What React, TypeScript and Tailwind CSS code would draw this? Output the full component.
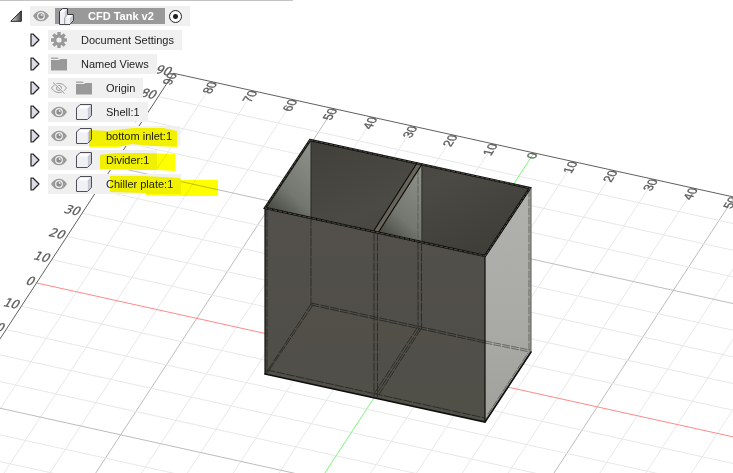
import React, { useState } from 'react';

type IconKind = 'gear' | 'folder' | 'body';

interface BrowserNode {
  id: string;
  label: string;
  icon: IconKind;
  hasEye: boolean;
  mark?: string;
}

const NODES: BrowserNode[] = [
  { id: 'settings', label: 'Document Settings', icon: 'gear', hasEye: false },
  { id: 'views', label: 'Named Views', icon: 'folder', hasEye: false },
  { id: 'origin', label: 'Origin', icon: 'folder', hasEye: true },
  { id: 'shell', label: 'Shell:1', icon: 'body', hasEye: true },
  { id: 'inlet', label: 'bottom inlet:1', icon: 'body', hasEye: true, mark: 'M41 4 L60 5 L86 2 L115 2 L129 5 L129 21 L104 20 L84 18 L70 21 L41 21 Z' },
  { id: 'divider', label: 'Divider:1', icon: 'body', hasEye: true, mark: 'M52 5 L66 3 L98 3 L127 4 L127 21 L110 20 L52 19 Z' },
  { id: 'chiller', label: 'Chiller plate:1', icon: 'body', hasEye: true, mark: 'M62 2 L96 2 L132 4 L133 6 L170 6 L170 22 L120 22 L98 21 L98 19 L62 18 Z' },
];

// Screen position of a grid point, in cells from the origin
const gridPoint = (u: number, v: number) => ({
  x: 397 + u * 40.05 - v * 15.22,
  y: 362.6 + u * 8.85 + v * 23.3,
});

const range = (from: number, to: number) =>
  Array.from({ length: to - from + 1 }, (_, i) => from + i);

const EyeIcon = ({ hidden = false }: { hidden?: boolean }) => (
  <svg viewBox="0 0 16 12" className="h-3 w-4" fill="none">
    {hidden ? (
      <g stroke="#9a9a9a">
        <path d="M.5 6C3 2.5 5.5 1.5 8 1.5S13 2.500 15.500 6C13 9.500 10.500 10.500 8 10.500S3 9.500 .5 6Z" />
        <circle cx="8" cy="6" r="2.500" />
        <path d="M2.500 .5L14 11.500" stroke="#f0f0f0" strokeWidth="2" />
        <path d="M2 .5L13.500 11.500" />
      </g>
    ) : (
      <>
        <path d="M0 6C2.500 2 5 .7 8 .7S13.500 2 16 6C13.500 10 11 11.300 8 11.300S2.500 10 0 6Z" fill="#9a9a9a" />
        <circle cx="8" cy="6" r="3.900" fill="#f0f0f0" />
        <circle cx="8" cy="6" r="2.700" fill="#8c8c8c" />
        <circle cx="8.600" cy="5" r="1" fill="#e8e8e8" />
      </>
    )}
  </svg>
);

const GearIcon = () => (
  <svg viewBox="0 0 16 16" className="h-4 w-4">
    <g fill="#999">
      {[0, 45, 90, 135].map((a) => (
        <rect key={a} x="6.300" y="0" width="3.400" height="16" transform={`rotate(${a} 8 8)`} />
      ))}
      <circle cx="8" cy="8" r="5.800" />
    </g>
    <circle cx="8" cy="8" r="2.600" fill="#f0f0f0" />
  </svg>
);

const FolderIcon = () => (
  <svg viewBox="0 0 16 14" className="h-3.5 w-4">
    <path d="M0 .5H6.500L8 2H0Z" fill="#aaa" />
    <path d="M0 3H8L9.500 2H16V13.500H0Z" fill="#999" />
  </svg>
);

const BodyIcon = () => (
  <svg viewBox="0 0 16 16" className="h-4 w-4" strokeLinejoin="round">
    <path d="M.6 4L4 .6H15.400V11.500L11.500 15.400H.6Z" fill="#fff" stroke="#3c3d46" />
    <path d="M11.500 4.500L15 1V11.300L11.500 14.800Z" fill="#c9cbd4" />
    <path d="M1.100 4.500H11.500V14.900H1.100Z" fill="#f0f1f5" />
  </svg>
);

const AssemblyIcon = () => (
  <svg viewBox="0 0 17 17" className="h-[17px] w-[17px]" strokeLinejoin="round">
    <path d="M1.500 3.500L4.500 .6H9.500V6.500H15.400V12.500L12 16.400H1.500Z" fill="#fff" stroke="#33343c" />
    <path d="M6.500 3.800L9 1.200V7L6.500 9.500Z" fill="#c9cbd4" />
    <path d="M12 10L15 7V12.300L12 15.600Z" fill="#c9cbd4" />
    <path d="M2 3.800H6.500V15.900H2ZM7 10H12V15.900H7Z" fill="#f0f1f5" />
    <path d="M6.700 9.500V16M6.700 9.700L9.500 7" fill="none" stroke="#777985" strokeWidth=".8" />
  </svg>
);

const icons: Record<IconKind, React.ReactNode> = {
  gear: <GearIcon />,
  folder: <FolderIcon />,
  body: <BodyIcon />,
};

const GridLine = ({ from, to, stroke, width = 1 }: {
  from: [number, number];
  to: [number, number];
  stroke: string;
  width?: number;
}) => {
  const a = gridPoint(...from);
  const b = gridPoint(...to);
  return <line x1={a.x} y1={a.y} x2={b.x} y2={b.y} stroke={stroke} strokeWidth={width} />;
};

const lineColor = (n: number) => (n % 5 === 0 ? '#bdbdbd' : '#e8e8e8');

const Grid = () => (
  <g>
    {range(-8, 18).filter((u) => u !== 0).map((u) => (
      <GridLine key={`u${u}`} from={[u, -9]} to={[u, 16]} stroke={lineColor(u)} />
    ))}
    {range(-8, 14).filter((v) => v !== 0).map((v) => (
      <GridLine key={`v${v}`} from={[-9, v]} to={[18, v]} stroke={lineColor(v)} />
    ))}
    <GridLine from={[-9, 0]} to={[18, 0]} stroke="#ff8a8a" />
    <GridLine from={[0, -9]} to={[0, 16]} stroke="#7df57d" />
    <GridLine from={[-9, -9]} to={[18, -9]} stroke="#606060" />
    <GridLine from={[-9, -9]} to={[-9, 4]} stroke="#606060" />
    <g fill="#5c5c5c" stroke="#5c5c5c" strokeWidth=".3" textAnchor="end">
      {range(-9, 5).map((u) => {
        const p = gridPoint(u, -9);
        return (
          <text
            key={u}
            y="4"
            transform={`translate(${p.x} ${p.y}) rotate(-57) skewX(20)`}
            className="font-['Liberation_Sans',sans-serif] text-[12px]"
          >
            {Math.abs(u) * 10}
          </text>
        );
      })}
      {range(-9, 2).map((v) => {
        const p = gridPoint(-9, v);
        return (
          <text
            key={v}
            y="4"
            transform={`translate(${p.x - 2} ${p.y - 1}) rotate(12) skewX(-20)`}
            className="font-['DejaVu_Sans',sans-serif] text-[12px]"
          >
            {Math.abs(v) * 10}
          </text>
        );
      })}
    </g>
  </g>
);

const Tank = () => (
  <g strokeLinecap="round">
    <defs>
      <linearGradient id="inner" x1=".3" y1="1" x2=".8" y2="0">
        <stop offset="0" stopColor="#484a44" />
        <stop offset=".35" stopColor="#747670" />
        <stop offset="1" stopColor="#8d8f89" />
      </linearGradient>
      <linearGradient id="back" x1="0" y1="0" x2="1" y2="1">
        <stop offset="0" stopColor="#3e3d38" />
        <stop offset=".5" stopColor="#4b4a44" />
        <stop offset="1" stopColor="#3b3a35" />
      </linearGradient>
      <linearGradient id="side" x1="0" y1="0" x2="0" y2="1">
        <stop offset="0" stopColor="#b1b2ad" />
        <stop offset=".65" stopColor="#a8a9a4" />
        <stop offset="1" stopColor="#a0a19b" />
      </linearGradient>
      <linearGradient id="front" x1="0" y1="0" x2="0" y2="1">
        <stop offset="0" stopColor="#53504b" />
        <stop offset="1" stopColor="#4e4d46" />
      </linearGradient>
    </defs>

    {/* Open top: back wall, left wall, divider */}
    <path d="M310 140L530 188L485 256L265 208Z" fill="url(#back)" />
    <path d="M311 141V218L267 208Z" fill="url(#inner)" />
    <path d="M422 165V243L378 233Z" fill="url(#inner)" />
    <path d="M417 163L422 164L378 233L373 232Z" fill="#69645a" />

    {/* Outer walls */}
    <path d="M265 208L485 256V422L265 374Z" fill="url(#front)" />
    <path d="M485 256L531 187V352L485 422Z" fill="url(#side)" />
    <path d="M311 305L485 343V422L265 374Z" fill="#56534c" opacity=".35" />

    {/* Hidden edges */}
    <g fill="none" stroke="#24241f" strokeWidth="1" strokeDasharray="8 2" opacity=".8">
      <path d="M267 209V373M311 218V304M374 233V396M377.500 233V397M418 242V328M421.500 243V329" />
      <path d="M311 303L417 326L485 341M311 305L485 343" />
      <path d="M311 304L266 373M313 305L268 372M417 328L374 394M421 329L378 396M419 329L376 395" />
      <path d="M267 370L485 418" />
    </g>
    <g fill="none" stroke="#555650" strokeWidth="1" strokeDasharray="7 2" opacity=".8">
      <path d="M485 341L530 350M485 343L530 352M529 190V350M488 414L528 353" />
      <path d="M418 168V241M422 166V243" />
    </g>
    <path d="M311 141V218M422 165V243" stroke="#292a26" fill="none" />

    {/* Visible edges */}
    <g fill="none" stroke="#0e0e0c">
      <path d="M310 140L530 188L485 256L265 208Z" strokeWidth="2.400" />
      <path d="M417 163L373 232M422 164L378 233" strokeWidth="1.200" />
      <path d="M485 256V422M265 208V374" strokeWidth="1.200" />
      <path d="M265 374L485 422L531 352" strokeWidth="1.600" />
      <path d="M531 188V352" stroke="#51524d" />
    </g>
    <path d="M310 140L530 188L485 256L265 208Z" fill="none" stroke="#66635a" strokeWidth=".7" strokeDasharray="3 2" />
  </g>
);

const Viewport = () => (
  <svg
    viewBox="0 0 733 473"
    preserveAspectRatio="xMinYMin slice"
    className="absolute inset-0 h-full w-full"
    role="img"
    aria-label="Tank model"
  >
    <Grid />
    <Tank />
  </svg>
);

const BrowserRow = ({ node, hidden, onToggle }: {
  node: BrowserNode;
  hidden: boolean;
  onToggle: (id: string) => void;
}) => (
  <li className="flex h-5 items-center">
    <button type="button" aria-label={`Expand ${node.label}`} className="w-[18px]">
      <svg viewBox="0 0 10 14" className="h-3.5 w-2.5">
        <path d="M1 1H3L9 7L3 13H1Z" fill="#dcdce4" stroke="#222" strokeWidth="1.200" strokeLinejoin="round" />
      </svg>
    </button>
    <div className="relative flex h-5 items-center bg-[#f0f0f0] pr-2 pl-[3px]">
      {node.hasEye && (
        <button type="button" aria-label={`Show ${node.label}`} className="mr-[9px]" onClick={() => onToggle(node.id)}>
          <EyeIcon hidden={hidden} />
        </button>
      )}
      {icons[node.icon]}
      <span className="ml-3.5 whitespace-nowrap">{node.label}</span>
      {node.mark && (
        <svg className="pointer-events-none absolute top-0 left-0 h-6 w-44 mix-blend-multiply" viewBox="0 0 176 24">
          <path d={node.mark} fill="#ffff00" />
        </svg>
      )}
    </div>
  </li>
);

export default function App() {
  const [hiddenIds, setHiddenIds] = useState<Set<string>>(new Set(['origin']));

  const toggleVisibility = (id: string) => {
    const next = new Set(hiddenIds);
    if (next.has(id)) {
      next.delete(id);
    } else {
      next.add(id);
    }
    setHiddenIds(next);
  };

  return (
    <main className="relative min-h-screen overflow-hidden bg-white font-['Liberation_Sans',Arial,sans-serif] text-[11px] leading-4 text-[#222]">
      <Viewport />
      <nav className="relative w-fit" aria-label="Browser">
        <div className="h-px w-[293px] bg-[#c4c4c4]" />
        <div className="flex flex-col gap-1 pt-[5px]">
          <div className="flex h-5 items-center pl-[10px]">
            <button type="button" aria-label="Collapse CFD Tank v2" className="w-5">
              <svg viewBox="0 0 12 12" className="h-3 w-3">
                <defs>
                  <linearGradient id="caret" x1="0" y1="0" x2="1" y2="0">
                    <stop offset="0" stopColor="#eee" />
                    <stop offset="1" stopColor="#444" />
                  </linearGradient>
                </defs>
                <path d="M11.300 .8V11.300H.8Z" fill="url(#caret)" stroke="#222" strokeLinejoin="round" />
              </svg>
            </button>
            <div className="flex h-5 items-center bg-[#f0f0f0] pr-2 pl-[3px]">
              <button type="button" aria-label="Show CFD Tank v2" className="mr-1.5" onClick={() => toggleVisibility('root')}>
                <EyeIcon hidden={hiddenIds.has('root')} />
              </button>
              <div className="flex h-4 items-center bg-[#999] pr-[11px] pl-[3px] font-bold text-white">
                <AssemblyIcon />
                <span className="ml-[13px] whitespace-nowrap">CFD Tank v2</span>
              </div>
              <input
                type="radio"
                defaultChecked
                aria-label="Activate CFD Tank v2"
                className="ml-1 size-[13px] appearance-none rounded-full border border-[#222] bg-white checked:bg-[radial-gradient(circle,#222_2px,#fff_3px)]"
              />
            </div>
          </div>
          <ul className="flex flex-col gap-1 pl-[30px]">
            {NODES.map((node) => (
              <BrowserRow key={node.id} node={node} hidden={hiddenIds.has(node.id)} onToggle={toggleVisibility} />
            ))}
          </ul>
        </div>
      </nav>
    </main>
  );
}
